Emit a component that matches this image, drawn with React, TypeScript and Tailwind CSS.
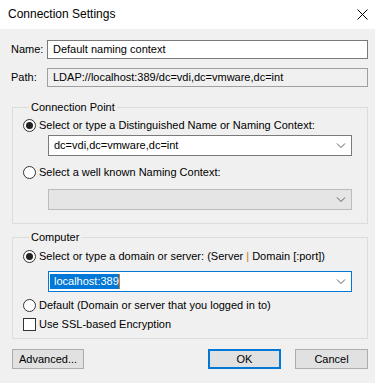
const Chevron = () => (
  <svg width="10" height="6" viewBox="0 0 10 6" className="shrink-0">
    <path d="M1 0.5 L5 4.5 L9 0.5" fill="none" stroke="#5a5a5a" strokeWidth="1" />
  </svg>
);

const Radio = ({ checked }: { checked?: boolean }) => (
  <span className="w-[13px] h-[13px] rounded-full border border-[#333] bg-white flex items-center justify-center shrink-0">
    {checked && <span className="w-[7px] h-[7px] rounded-full bg-[#222]" />}
  </span>
);

const App = () => {
  return (
    <div
      className="w-[375px] h-[383px] bg-[#f0f0f0] text-[11px] text-black leading-[15px]"
      style={{ fontFamily: '"Liberation Sans", Arial, sans-serif' }}
    >
      <div className="h-[29px] bg-white flex items-center justify-between pl-[8px] pr-[7px]">
        <span className="text-[12px]">Connection Settings</span>
        <svg width="11" height="11" viewBox="0 0 11 11">
          <path d="M0.5 0.5 L10.5 10.5 M10.5 0.5 L0.5 10.5" stroke="#000" strokeWidth="1" fill="none" />
        </svg>
      </div>

      <div className="px-[7px]">
        <div className="flex items-center mt-[11px] h-[19px] pl-[4px]">
          <span className="w-[36px]">Name:</span>
          <div className="flex-1 h-[19px] bg-white border border-[#7a7a7a] pl-[5px] flex items-center">
            Default naming context
          </div>
        </div>
        <div className="flex items-center mt-[9px] h-[19px] pl-[4px]">
          <span className="w-[36px]">Path:</span>
          <div className="flex-1 h-[19px] bg-[#f0f0f0] border border-[#a0a0a0] pl-[5px] flex items-center">
            LDAP://localhost:389/dc=vdi,dc=vmware,dc=int
          </div>
        </div>

        {/* Connection Point */}
        <fieldset className="mt-[12px] ml-[5px] border border-[#dcdcdc] pl-[10px] pr-[15px] pb-[13px]">
          <legend className="ml-[6px] px-[2px] leading-[16px]">Connection Point</legend>
          <label className="flex items-center gap-[3px] mt-[3px] h-[15px]">
            <Radio checked />
            <span>Select or type a Distinguished Name or Naming Context:</span>
          </label>
          <div className="ml-[25px] mt-[2px] h-[21px] bg-white border border-[#7a7a7a] flex items-center justify-between pl-[5px] pr-[5px]">
            <span>dc=vdi,dc=vmware,dc=int</span>
            <Chevron />
          </div>
          <label className="flex items-center gap-[3px] mt-[9px] h-[15px]">
            <Radio />
            <span>Select a well known Naming Context:</span>
          </label>
          <div className="ml-[25px] mt-[9px] h-[21px] bg-[#e5e5e5] border border-[#bcbcbc] flex items-center justify-end pr-[5px]">
            <Chevron />
          </div>
        </fieldset>

        {/* Computer */}
        <fieldset className="mt-[5px] ml-[5px] border border-[#dcdcdc] pl-[10px] pr-[15px] pb-[6px]">
          <legend className="ml-[6px] px-[2px] leading-[16px]">Computer</legend>
          <label className="flex items-center gap-[3px] mt-[4px] h-[15px]">
            <Radio checked />
            <span>
              Select or type a domain or server: (Server <span className="text-[#c87814]">|</span> Domain [:port])
            </span>
          </label>
          <div className="ml-[25px] mt-[7px] h-[21px] bg-white border border-[#0078d7] flex items-center justify-between pl-[1px] pr-[5px]">
            <span className="flex items-center">
              <span className="bg-[#0078d7] text-white pl-[4px] h-[15px] leading-[15px]">localhost:389</span>
              <span className="w-[1px] h-[15px] bg-[#e07810]" />
            </span>
            <Chevron />
          </div>
          <label className="flex items-center gap-[3px] mt-[6px] h-[15px]">
            <Radio />
            <span>Default (Domain or server that you logged in to)</span>
          </label>
          <label className="flex items-center gap-[3px] mt-[4px] h-[15px]">
            <span className="w-[13px] h-[13px] border border-[#333] bg-white shrink-0" />
            <span>Use SSL-based Encryption</span>
          </label>
        </fieldset>

        <div className="flex items-center mt-[10px] pl-[5px]">
          <button className="w-[72px] h-[20px] bg-[#e1e1e1] border border-[#adadad] flex items-center justify-center">
            Advanced...
          </button>
          <div className="flex-1" />
          <button className="w-[73px] h-[20px] bg-[#e1e1e1] border-2 border-[#0078d7] flex items-center justify-center">
            OK
          </button>
          <button className="ml-[14px] w-[73px] h-[20px] bg-[#e1e1e1] border border-[#adadad] flex items-center justify-center">
            Cancel
          </button>
        </div>
      </div>
    </div>
  );
};

export default App;
